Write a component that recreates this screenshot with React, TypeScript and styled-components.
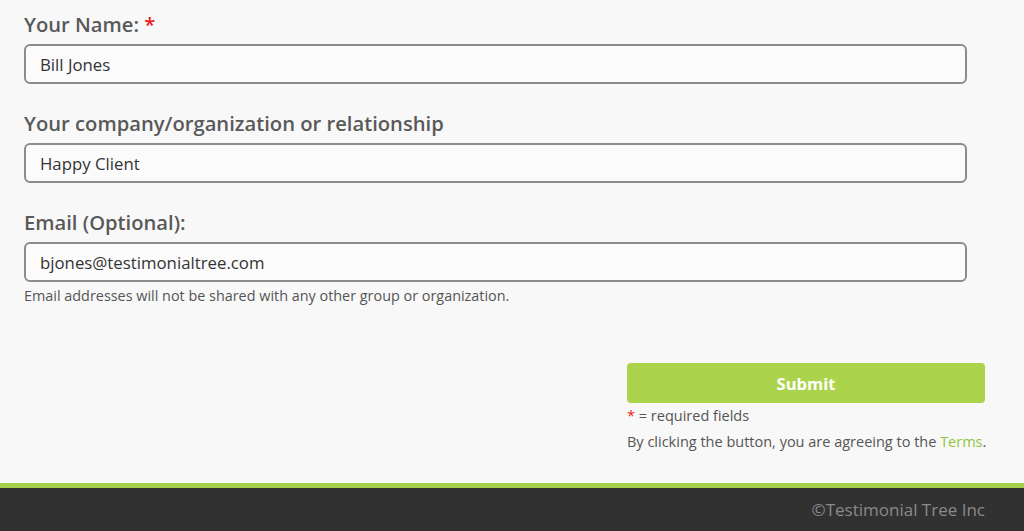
import React, {useState} from 'react';
import styled, {createGlobalStyle} from 'styled-components';

const GlobalStyle = createGlobalStyle`
    html, body {
        margin: 0;
        padding: 0;
        background: #f8f8f8;
        font-family: "Open Sans", "Liberation Sans", sans-serif;
    }
    * {
        box-sizing: border-box;
    }
`;

interface Field {
    name: string;
    label: string;
    required?: boolean;
    hint?: string;
}

const fields: Field[] = [
    {name: 'name', label: 'Your Name:', required: true},
    {name: 'company', label: 'Your company/organization or relationship'},
    {name: 'email', label: 'Email (Optional):', hint: 'Email addresses will not be shared with any other group or organization.'},
];

const App: React.FC = () => {
    const [values, setValues] = useState<Record<string, string>>({
        name: 'Bill Jones',
        company: 'Happy Client',
        email: 'bjones@testimonialtree.com',
    });

    return (
        <Page>
            <GlobalStyle/>
            <Form onSubmit={e => e.preventDefault()}>
                {fields.map(field => (
                    <FieldGroup key={field.name}>
                        <Label htmlFor={field.name}>
                            {field.label}
                            {field.required && <Star> *</Star>}
                        </Label>
                        <Input
                            id={field.name}
                            value={values[field.name]}
                            onChange={e => setValues({...values, [field.name]: e.target.value})}
                        />
                        {field.hint && <Hint>{field.hint}</Hint>}
                    </FieldGroup>
                ))}
                <Actions>
                    <SubmitButton type="submit">Submit</SubmitButton>
                    <Note><Star>*</Star> = required fields</Note>
                    <Terms>By clicking the button, you are agreeing to the <TermsLink href="#">Terms</TermsLink>.</Terms>
                </Actions>
            </Form>
            <Footer>©Testimonial Tree Inc</Footer>
        </Page>
    );
};

const Page = styled.div`
    min-height: 100vh;
    display: flex;
    flex-direction: column;
`;

const Form = styled.form`
    padding: 10px 0 0 24px;
    display: flex;
    flex-direction: column;
`;

const FieldGroup = styled.div`
    width: 943px;
    display: flex;
    flex-direction: column;
    margin-bottom: 25px;
`;

const Label = styled.label`
    font-size: 20.2px;
    line-height: 28px;
    font-weight: 600;
    color: #595959;
    margin-bottom: 6px;
`;

const Star = styled.span`
    color: #ee1c1c;
`;

const Input = styled.input`
    height: 40px;
    border: 2px solid #8c8c8c;
    border-radius: 6px;
    background: #fbfbfb;
    padding: 0 14px;
    font-family: inherit;
    font-size: 16.8px;
    color: #333;
    outline: none;
`;

const Hint = styled.div`
    margin-top: 5px;
    font-size: 14.4px;
    line-height: 18px;
    color: #555;
`;

const Actions = styled.div`
    align-self: flex-end;
    width: 358px;
    margin: 33px 39px 0 0;
    display: flex;
    flex-direction: column;
`;

const SubmitButton = styled.button`
    height: 40px;
    border: none;
    border-radius: 4px;
    background: #abd44c;
    color: #fff;
    font-family: inherit;
    font-size: 16.5px;
    font-weight: 700;
    cursor: pointer;
`;

const Note = styled.div`
    margin-top: 3px;
    font-size: 14.5px;
    line-height: 20px;
    color: #555;
`;

const Terms = styled.div`
    margin-top: 6px;
    font-size: 14.5px;
    line-height: 20px;
    color: #555;
    white-space: nowrap;
`;

const TermsLink = styled.a`
    color: #94c33c;
    text-decoration: none;
`;

const Footer = styled.footer`
    margin-top: auto;
    border-top: 5px solid #a4cf48;
    background: #313131;
    height: 48px;
    padding-right: 39px;
    display: flex;
    align-items: center;
    justify-content: flex-end;
    font-size: 17px;
    color: #8a8a8a;
`;

export default App;
